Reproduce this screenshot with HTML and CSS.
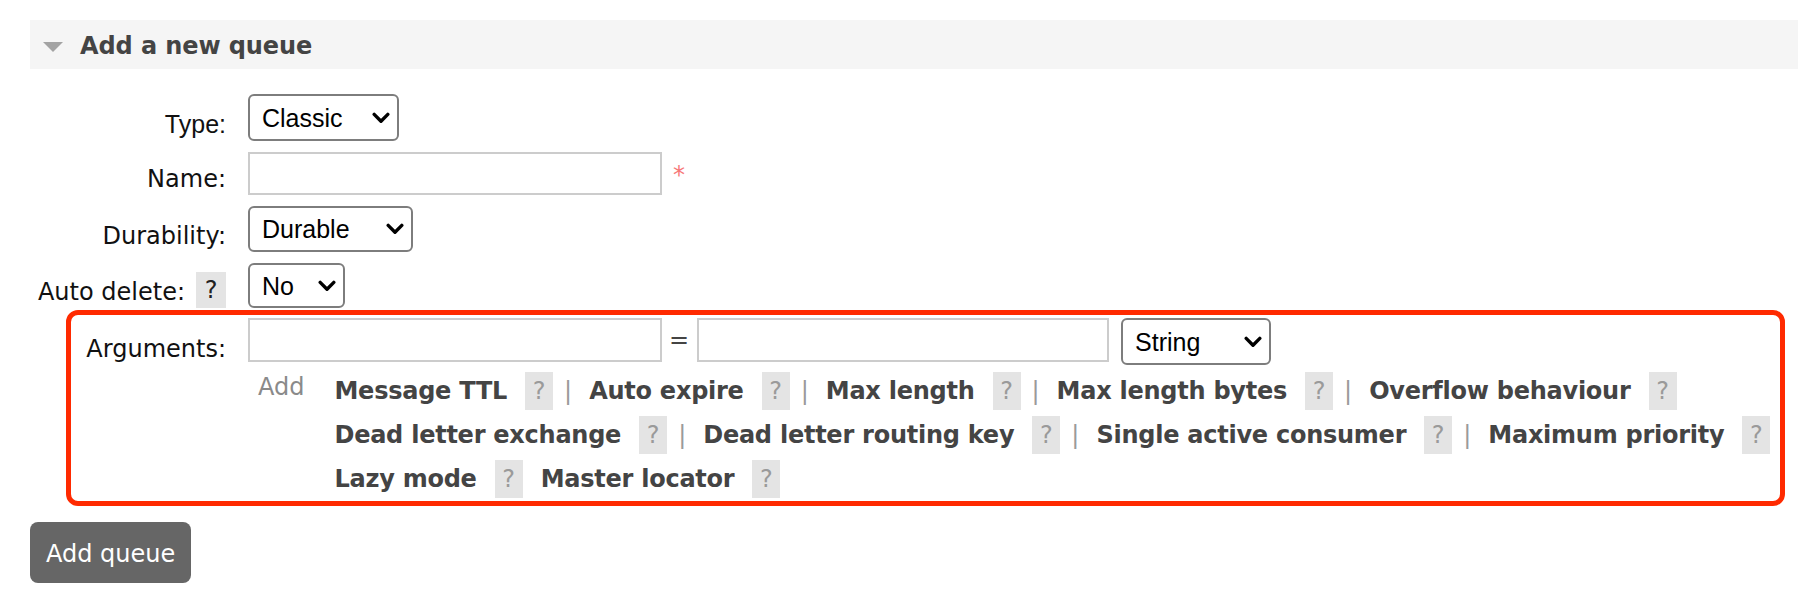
FILE: index.html
```html
<!DOCTYPE html>
<html>
<head>
<meta charset="utf-8">
<title>Add a new queue</title>
<link rel="stylesheet" href="styles.css">
</head>
<body>
<div class="page">
  <div class="section-head">
    <svg class="tri" width="20" height="10" viewBox="0 0 20 10"><polygon points="0,0 20,0 10,10" fill="#a3a3a3"/></svg>
    <h2 class="section-title">Add a new queue</h2>
  </div>

  <form class="form">
    <div class="grid">
      <div class="lbl"><span class="lbl-text lbl-type">Type:</span></div>
      <div class="ctl">
        <select class="sel sel-type"><option>Classic</option><option>Quorum</option><option>Stream</option></select>
      </div>

      <div class="lbl"><span class="lbl-text">Name:</span></div>
      <div class="ctl">
        <input class="txt txt-name" type="text"><span class="mand">*</span>
      </div>

      <div class="lbl"><span class="lbl-text">Durability:</span></div>
      <div class="ctl">
        <select class="sel sel-dur"><option>Durable</option><option>Transient</option></select>
      </div>

      <div class="lbl"><span class="lbl-text">Auto delete:</span><span class="help help-dark">?</span></div>
      <div class="ctl">
        <select class="sel sel-auto"><option>No</option><option>Yes</option></select>
      </div>
    </div>

    <div class="args-box">
      <div class="lbl"><span class="lbl-text lbl-args">Arguments:</span></div>
      <div class="arg-inputs">
        <input class="txt txt-arg" type="text">
        <span class="eq">=</span>
        <input class="txt txt-val" type="text">
        <select class="sel sel-kind"><option>String</option><option>Number</option><option>Boolean</option><option>List</option></select>
      </div>

      <div class="empty"></div>
      <div class="arg-links">
        <span class="add-link">Add</span>
        <div class="links">
          <div class="lrow">
            <span class="alink">Message TTL</span><span class="help">?</span><span class="sep">|</span>
            <span class="alink">Auto expire</span><span class="help">?</span><span class="sep">|</span>
            <span class="alink">Max length</span><span class="help">?</span><span class="sep">|</span>
            <span class="alink">Max length bytes</span><span class="help">?</span><span class="sep">|</span>
            <span class="alink">Overflow behaviour</span><span class="help">?</span>
          </div>
          <div class="lrow">
            <span class="alink">Dead letter exchange</span><span class="help">?</span><span class="sep">|</span>
            <span class="alink">Dead letter routing key</span><span class="help">?</span><span class="sep">|</span>
            <span class="alink">Single active consumer</span><span class="help">?</span><span class="sep">|</span>
            <span class="alink">Maximum priority</span><span class="help">?</span>
          </div>
          <div class="lrow">
            <span class="alink">Lazy mode</span><span class="help">?</span>
            <span class="alink alink-spaced">Master locator</span><span class="help">?</span>
          </div>
        </div>
      </div>
    </div>

    <button class="btn" type="button">Add queue</button>
  </form>
</div>
</body>
</html>
```

FILE: styles.css
```css
* { box-sizing: border-box; }

html, body {
  margin: 0;
  background: #ffffff;
}

body {
  font-family: "DejaVu Sans", Verdana, sans-serif;
  font-size: 24px;
  color: #111;
}

.page {
  padding: 20px 0 0 30px;
}

/* section header */
.section-head {
  height: 49px;
  background: #f5f5f5;
  display: flex;
  align-items: center;
  padding-left: 13px;
}

.tri {
  display: block;
  margin-top: 5px;
}

.section-title {
  margin: 2px 0 0 17px;
  font-size: 24px;
  line-height: 24px;
  font-weight: bold;
  color: #444;
  letter-spacing: -0.1px;
}

/* form grid */
.grid {
  display: grid;
  grid-template-columns: 196px auto;
  column-gap: 22px;
  row-gap: 11px;
  margin-top: 25px;
  justify-content: start;
}

.lbl {
  display: flex;
  justify-content: flex-end;
  align-items: flex-end;
  align-self: end;
}

.lbl-text {
  line-height: 24px;
  padding-bottom: 4px;
  white-space: nowrap;
  color: #111;
}

.lbl-type {
  font-family: "Liberation Sans", Arial, sans-serif;
  font-size: 25px;
  line-height: 25px;
}

.lbl-args {
  padding-bottom: 4px;
}

.ctl {
  display: flex;
  align-items: center;
}

/* inputs */
.txt {
  border: 2px solid #cccccc;
  border-radius: 0;
  background: #fff;
  padding: 0 6px;
  font: 24px "DejaVu Sans", sans-serif;
  outline: none;
  margin: 0;
}

.txt-name { width: 414px; height: 43px; }
.txt-arg  { width: 414px; height: 44px; }
.txt-val  { width: 412px; height: 44px; }

.mand {
  color: #f77777;
  margin-left: 11px;
  align-self: flex-end;
  line-height: 24px;
  padding-bottom: 8px;
}

/* selects */
.sel {
  -webkit-appearance: none;
  appearance: none;
  margin: 0;
  border: 2px solid #7d7d7d;
  border-radius: 6px;
  background-color: #fff;
  background-image: url("data:image/svg+xml,%3Csvg xmlns='http://www.w3.org/2000/svg' width='18' height='12' viewBox='0 0 18 12'%3E%3Cpath d='M2.2 2.4 L9 9.2 L15.8 2.4' fill='none' stroke='%23000' stroke-width='3.4' stroke-linecap='round' stroke-linejoin='round'/%3E%3C/svg%3E");
  background-repeat: no-repeat;
  background-position: right 7px center;
  background-size: 18px 12px;
  padding: 0 0 0 12px;
  font-family: "Liberation Sans", Arial, sans-serif;
  font-size: 25px;
  color: #000;
  outline: none;
}

.sel-type { width: 151px; height: 47px; }
.sel-dur  { width: 165px; height: 46px; }
.sel-auto { width: 97px;  height: 45px; }
.sel-kind { width: 150px; height: 47px; margin-left: 12px; }

/* help badges */
.help {
  display: inline-flex;
  align-items: center;
  justify-content: center;
  width: 28px;
  height: 38px;
  margin-left: 18px;
  background: #e4e4e4;
  color: #9a9a9a;
  font-size: 24px;
  line-height: 24px;
  flex: none;
}

.help-dark {
  width: 30px;
  height: 36px;
  margin-left: 11px;
  color: #222;
}

/* arguments box */
.args-box {
  margin: 2px 13px 0 36px;
  border: 5px solid #ff2a00;
  border-radius: 12px;
  padding: 3px 0 0 0;
  display: grid;
  grid-template-columns: 155px auto;
  column-gap: 22px;
  row-gap: 4px;
  justify-content: start;
}

.arg-inputs {
  display: flex;
  align-items: flex-start;
}

.eq {
  height: 44px;
  line-height: 44px;
  margin: 0 8px 0 7px;
  color: #444;
}

.arg-links {
  display: flex;
  align-items: flex-start;
}

.add-link {
  margin-left: 10px;
  line-height: 36px;
  color: #8a8a8a;
}

.links {
  margin-left: 30px;
  display: flex;
  flex-direction: column;
}

.lrow {
  display: flex;
  align-items: center;
  height: 44px;
  white-space: nowrap;
}

.alink {
  font-weight: bold;
  color: #444;
  line-height: 24px;
  letter-spacing: -0.25px;
}

.alink-spaced {
  margin-left: 18px;
}

.sep {
  color: #9a9a9a;
  margin: 0 17px 0 11px;
  line-height: 24px;
}

/* button */
.btn {
  display: block;
  margin-top: 16px;
  height: 61px;
  padding: 3px 16px 0 16px;
  border: 0;
  border-radius: 8px;
  background: #666666;
  color: #fff;
  font-family: "DejaVu Sans", Verdana, sans-serif;
  font-size: 24px;
  line-height: 24px;
}
```
